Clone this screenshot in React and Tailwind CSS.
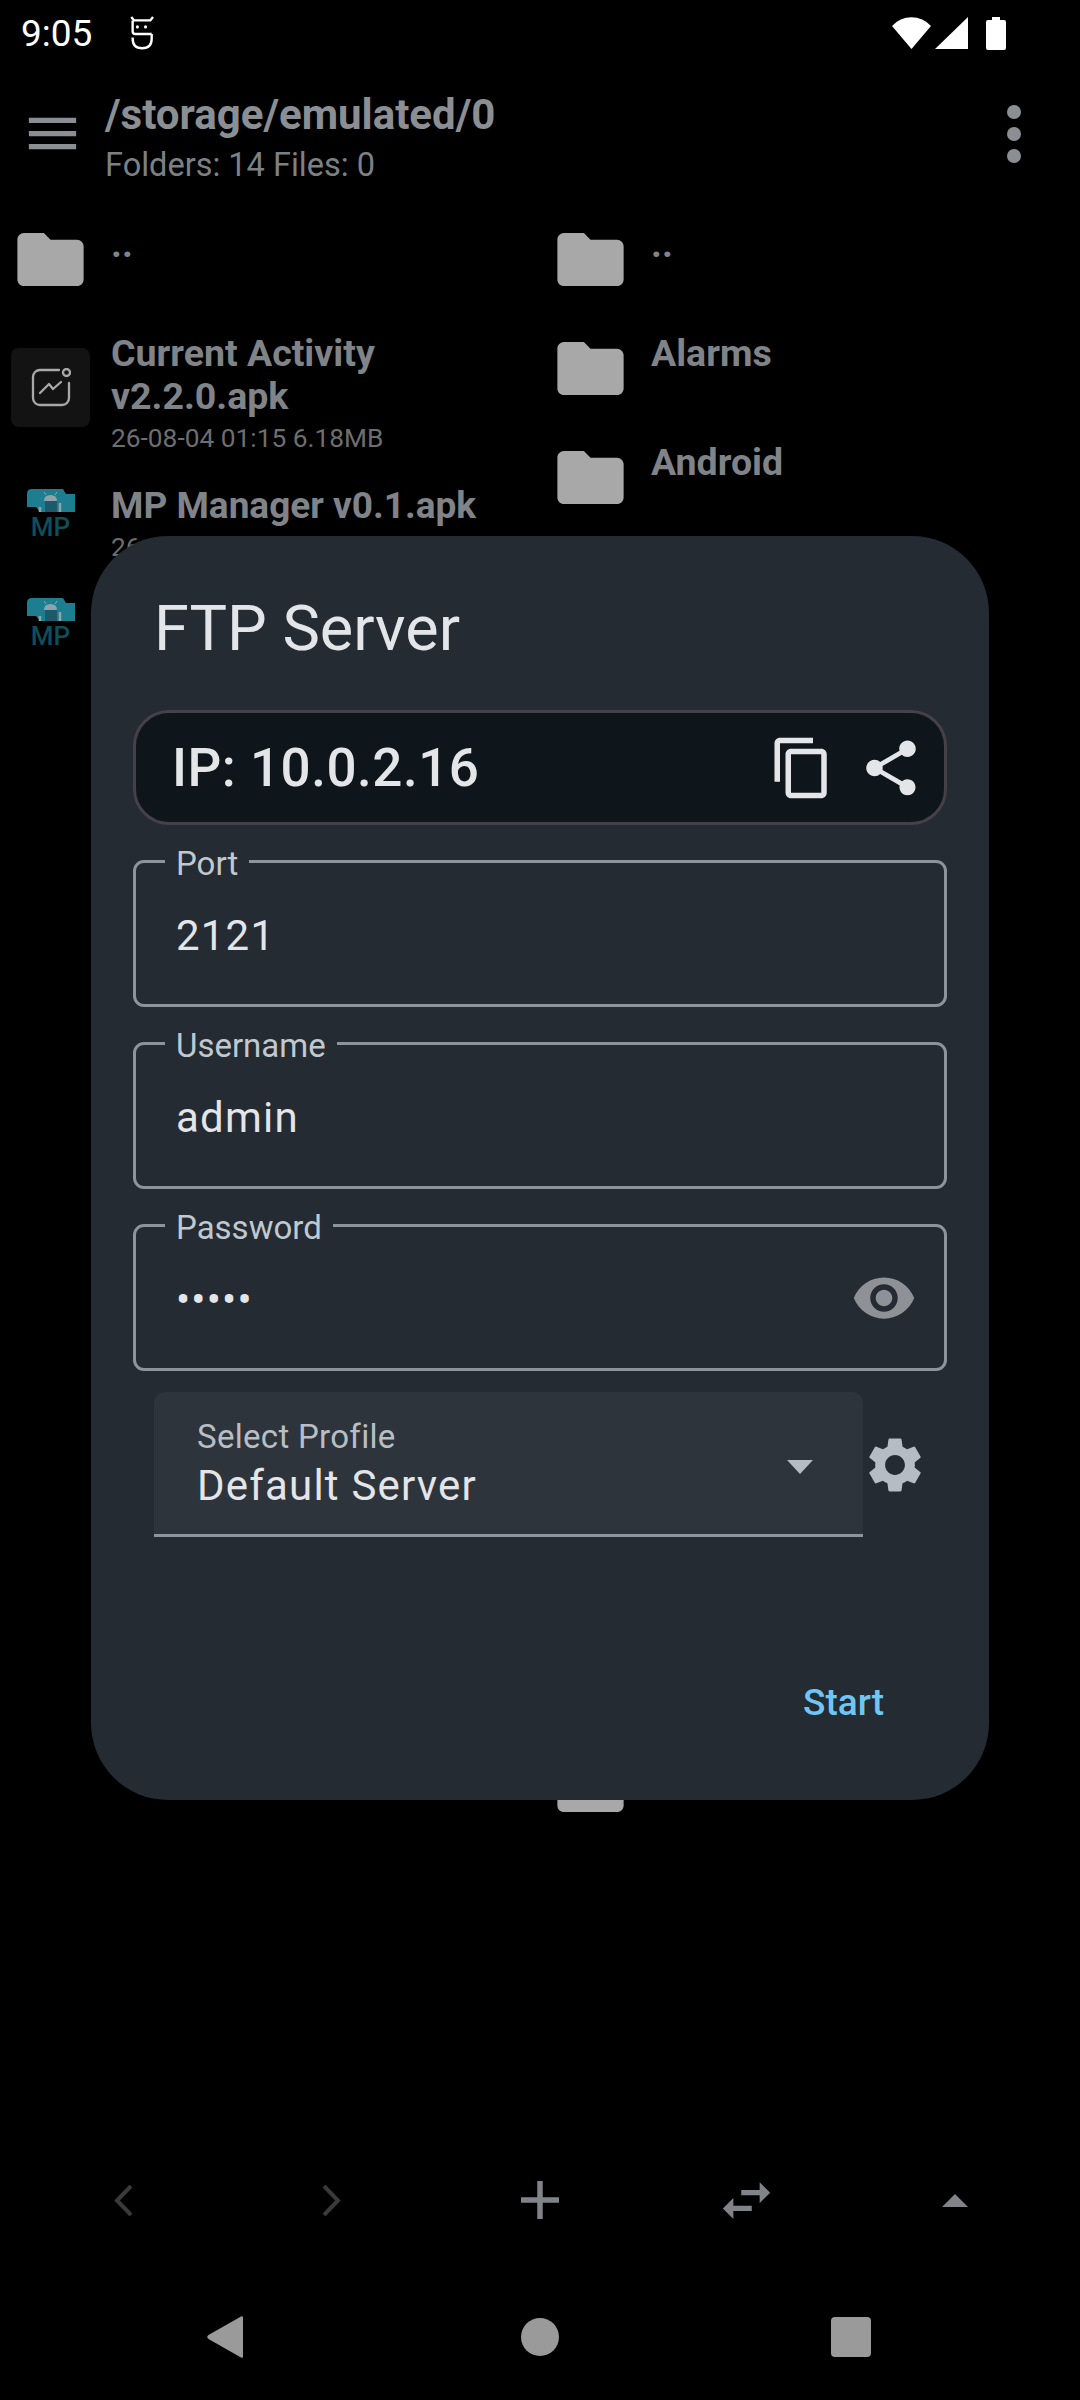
import React from 'react';

const M = {
  menu: 'M3 18h18v-2H3v2zm0-5h18v-2H3v2zm0-7v2h18V6H3z',
  copy: 'M16 1H4c-1.1 0-2 .9-2 2v14h2V3h12V1zm3 4H8c-1.1 0-2 .9-2 2v14c0 1.1.9 2 2 2h11c1.1 0 2-.9 2-2V7c0-1.1-.9-2-2-2zm0 16H8V7h11v14z',
  share: 'M18 16.08c-.76 0-1.44.3-1.96.77L8.91 12.7c.05-.23.09-.46.09-.7s-.04-.47-.09-.7l7.05-4.11c.54.5 1.25.81 2.04.81 1.66 0 3-1.34 3-3s-1.34-3-3-3-3 1.34-3 3c0 .24.04.47.09.7L8.04 9.81C7.5 9.31 6.79 9 6 9c-1.66 0-3 1.34-3 3s1.34 3 3 3c.79 0 1.5-.31 2.04-.81l7.12 4.16c-.05.21-.08.43-.08.65 0 1.61 1.31 2.92 2.92 2.92 1.61 0 2.92-1.31 2.92-2.92s-1.31-2.92-2.92-2.92z',
  eye: 'M12 4.5C7 4.5 2.73 7.61 1 12c1.73 4.39 6 7.5 11 7.5s9.27-3.11 11-7.5c-1.73-4.39-6-7.5-11-7.5zM12 17c-2.76 0-5-2.24-5-5s2.24-5 5-5 5 2.24 5 5-2.24 5-5 5zm0-8c-1.66 0-3 1.34-3 3s1.34 3 3 3 3-1.34 3-3-1.34-3-3-3z',
  gear: 'M19.14 12.94c.04-.3.06-.61.06-.94 0-.32-.02-.64-.07-.94l2.03-1.58c.18-.14.23-.41.12-.61l-1.92-3.32c-.12-.22-.37-.29-.59-.22l-2.39.96c-.5-.38-1.03-.7-1.62-.94l-.36-2.54c-.04-.24-.24-.41-.48-.41h-3.84c-.24 0-.43.17-.47.41l-.36 2.54c-.59.24-1.13.57-1.62.94l-2.39-.96c-.22-.08-.47 0-.59.22L2.74 8.87c-.12.21-.08.47.12.61l2.03 1.58c-.05.3-.09.63-.09.94s.02.64.07.94l-2.03 1.58c-.18.14-.23.41-.12.61l1.92 3.32c.12.22.37.29.59.22l2.39-.96c.5.38 1.03.7 1.62.94l.36 2.54c.05.24.24.41.48.41h3.84c.24 0 .44-.17.47-.41l.36-2.54c.59-.24 1.13-.56 1.62-.94l2.39.96c.22.08.47 0 .59-.22l1.92-3.32c.12-.22.07-.47-.12-.61l-2.01-1.58zM12 15.6c-1.98 0-3.6-1.62-3.6-3.6s1.62-3.6 3.6-3.6 3.6 1.62 3.6 3.6-1.62 3.6-3.6 3.6z',
  swap: 'M6.99 11L3 15l3.99 4v-3H14v-2H6.99v-3zM21 9l-3.99-4v3H10v2h7.01v3L21 9z',
  folder: 'M10 4H4c-1.1 0-2 .9-2 2v12c0 1.1.9 2 2 2h16c1.1 0 2-.9 2-2V8c0-1.1-.9-2-2-2h-8l-2-2z',
};

function Icon({ d, className }) {
  return (
    <svg viewBox="0 0 24 24" fill="currentColor" className={className}>
      <path d={d} />
    </svg>
  );
}

function Folder() {
  return (
    <svg viewBox="2 4 20 16" fill="currentColor" className="w-[67px] h-[53px] shrink-0 text-[#a8a8a8]">
      <path d={M.folder} />
    </svg>
  );
}

function MpIcon() {
  return (
    <div className="w-[79px] shrink-0 flex flex-col items-center">
      <svg viewBox="0 0 48 23" className="w-[48px] h-[23px]">
        <path d="M0 5q0-5 5-5h31l3 5h9v18H13l-4-5H0z" fill="#1c7e8e" />
        <path d="M18 12h12v11H18z" fill="#1c5a6a" />
        <path d="M17 12q0-6 6.500-6t6.500 6z" fill="#8fa3ad" />
        <path d="M19 6l-2-3M28 6l2-3" stroke="#8fa3ad" strokeWidth="1" />
        <path d="M33 14v9M13 18v5" stroke="#8fa3ad" strokeWidth="2.500" />
      </svg>
      <span className="text-[26px] leading-[30px] font-medium text-[#0f4e5a]">MP</span>
    </div>
  );
}

function ActivityIcon() {
  return (
    <div className="w-[79px] h-[79px] ml-[11px] shrink-0 rounded-[8px] bg-[#131313] flex items-center justify-center">
      <svg viewBox="0 0 40 40" className="w-[40px] h-[40px]" fill="none" stroke="#a8a8a8" strokeWidth="2.300" strokeLinecap="round" strokeLinejoin="round">
        <path d="M28 2H9a7 7 0 0 0-7 7v21a7 7 0 0 0 7 7h22a7 7 0 0 0 7-7V15" />
        <circle cx="35.500" cy="4.500" r="3.500" />
        <path d="M9 25l9-9 4 5 8-7" />
      </svg>
    </div>
  );
}

const folders = ['..', 'Alarms', 'Android', 'Audiobooks', 'DCIM', 'Documents', 'Download', 'Movies', 'Music', 'Notifications', 'Pictures', 'Podcasts', 'Recordings', 'Ringtones', 'Screenshots'];

function FolderRow({ name }) {
  return (
    <div className="h-[109px] flex items-center pl-[17px]">
      <Folder />
      <span className="self-start ml-[27px] pt-[18px] text-[37.500px] leading-[43px] font-bold text-[#808488]">{name}</span>
    </div>
  );
}

function Outlined({ label, children }) {
  return (
    <div className="relative h-[147px] rounded-[11px] border-[3px] border-[#8e949b] flex items-center justify-between pl-[40px] pr-[27px]">
      <span className="absolute -top-[19px] left-[29px] px-[11px] bg-[#242b32] text-[33px] leading-[39px] text-[#c0c8d0]">{label}</span>
      {children}
    </div>
  );
}

export default function App() {
  return (
    <div className="relative w-[1080px] h-[2400px] bg-black overflow-hidden font-['Roboto',sans-serif]">
      {/* Status bar */}
      <div className="h-[66px] flex items-center pl-[21px] pr-[74px] text-white">
        <span className="text-[37px] leading-none">9:05</span>
        <svg viewBox="60 25 70 100" className="ml-[38px] w-[25px] h-[34px]" fill="none" stroke="#fff" strokeWidth="7">
          <path d="M62 28l8 10h48l8-10" />
          <path d="M66 38v32q0 8 8 8h48" />
          <path d="M122 78v14q0 28-28 28t-28-28v-4" />
          <circle cx="80" cy="57" r="4.500" fill="#fff" stroke="none" />
          <circle cx="104" cy="57" r="4.500" fill="#fff" stroke="none" />
        </svg>
        <div className="ml-auto flex items-center">
          <svg viewBox="0 0 39 32" className="w-[39px] h-[32px]" fill="#fff"><path d="M19.500 32L0 9A26 26 0 0 1 39 9z" /></svg>
          <svg viewBox="0 0 33 32" className="ml-[4px] w-[33px] h-[32px]" fill="#fff"><path d="M33 0v32H0z" /></svg>
          <svg viewBox="0 0 20 33" className="ml-[18px] w-[20px] h-[33px]" fill="#fff"><path d="M6 0h8v3h4q2 0 2 2v26q0 2-2 2H2q-2 0-2-2V5q0-2 2-2h4z" /></svg>
        </div>
      </div>

      {/* Toolbar */}
      <div className="h-[139px] flex pl-[21px] pr-[59px] text-[#8b8f94]">
        <Icon d={M.menu} className="w-[63px] h-[63px] mt-[36px]" />
        <div className="ml-[21px] pt-[24px]">
          <div className="text-[42px] leading-[50px] font-bold">/storage/emulated/0</div>
          <div className="mt-[5px] text-[32.500px] leading-[40px] text-[#7d8084]">Folders: 14 Files: 0</div>
        </div>
        <svg viewBox="0 0 14 58" fill="currentColor" className="ml-auto w-[14px] h-[58px] mt-[39px]">
          <circle cx="7" cy="7" r="7" /><circle cx="7" cy="29" r="7" /><circle cx="7" cy="51" r="7" />
        </svg>
      </div>

      {/* Two file panes behind the dialog */}
      <div className="grid grid-cols-2">
        <div>
          <FolderRow name=".." />
          <div className="h-[147px] flex items-center">
            <ActivityIcon />
            <div className="self-start ml-[21px] pt-[18px] w-[360px]">
              <div className="text-[37.500px] leading-[43px] font-bold text-[#808488]">Current Activity v2.2.0.apk</div>
              <div className="mt-[1px] text-[26.300px] leading-[38px] text-[#6e6e6e]">26-08-04 01:15 6.18MB</div>
            </div>
          </div>
          <div className="h-[109px] flex items-center pl-[11px]">
            <MpIcon />
            <div className="self-start ml-[21px] pt-[23px]">
              <div className="text-[37px] leading-[43px] font-bold text-[#808488]">MP Manager v0.1.apk</div>
              <div className="mt-[1px] text-[26.300px] leading-[38px] text-[#6e6e6e]">26-08-04 01:15 2.40MB</div>
            </div>
          </div>
          <div className="h-[109px] flex items-center pl-[11px]">
            <MpIcon />
          </div>
        </div>
        <div>
          {folders.map((name, i) => <FolderRow key={i} name={name} />)}
        </div>
      </div>

      {/* FTP dialog */}
      <div className="absolute left-[91px] top-[536px] w-[898px] h-[1264px] rounded-[77px] bg-[#242b32] pt-[53px] px-[42px]">
        <h2 className="pl-[21px] text-[63px] leading-[80px] font-normal text-[#e3e5e8]">FTP Server</h2>
        <div className="mt-[41px] h-[115px] rounded-[36px] border-[3px] border-[#45404a] bg-[#0f161b] flex items-center pl-[36px] pr-[20px] text-[#e3e5e8]">
          <span className="pt-[3px] text-[53px] font-medium tracking-[0.5px]">IP: 10.0.2.16</span>
          <Icon d={M.copy} className="ml-auto w-[66px] h-[66px]" />
          <Icon d={M.share} className="ml-[23px] w-[66px] h-[66px]" />
        </div>
        <div className="mt-[35px] flex flex-col gap-[35px]">
          <Outlined label="Port"><span className="pt-[4px] text-[42px] tracking-[1.2px] text-[#e3e5e8]">2121</span></Outlined>
          <Outlined label="Username"><span className="pt-[4px] text-[42px] tracking-[1.2px] text-[#e3e5e8]">admin</span></Outlined>
          <Outlined label="Password">
            <span className="pt-[4px] text-[42px] tracking-[1.2px] text-[#e3e5e8]">•••••</span>
            <Icon d={M.eye} className="w-[66px] h-[66px] text-[#8e9296]" />
          </Outlined>
        </div>
        <div className="mt-[21px] pl-[21px] flex items-center">
          <div className="w-[709px] h-[145px] rounded-t-[11px] bg-[#2e343c] border-b-[3px] border-[#8e949b] flex items-center justify-between pl-[43px] pr-[50px]">
            <div className="mt-[3px]">
              <div className="text-[33px] leading-[40px] tracking-[0.3px] text-[#b9bec4]">Select Profile</div>
              <div className="mt-[3px] text-[42px] leading-[52px] tracking-[1.2px] text-[#e3e5e8]">Default Server</div>
            </div>
            <svg viewBox="0 0 26 14" className="mt-[8px] w-[26px] h-[14px]" fill="#b5bcc4"><path d="M0 0h26L13 14z" /></svg>
          </div>
          <Icon d={M.gear} className="ml-[-1px] w-[66px] h-[66px] text-[#b5bcc4]" />
        </div>
        <div className="mt-[143px] pr-[63px] text-right text-[37px] leading-[46px] font-medium text-[#6fc6f5]">Start</div>
      </div>

      {/* Bottom actions */}
      <div className="absolute bottom-[167px] left-0 right-0 grid grid-cols-5 h-[66px] px-[19px] place-items-center">
        <svg viewBox="0 0 19 31" className="w-[19px] h-[31px]" fill="none" stroke="#3a3a3a" strokeWidth="4"><path d="M17 1L3 15.500 17 30" /></svg>
        <svg viewBox="0 0 19 31" className="w-[19px] h-[31px]" fill="none" stroke="#3a3a3a" strokeWidth="4"><path d="M2 1l14 14.500L2 30" /></svg>
        <svg viewBox="0 0 38 38" className="w-[38px] h-[38px]" fill="#808488"><path d="M16.250 0h5.500v16.250H38v5.500H21.750V38h-5.500V21.750H0v-5.500h16.250z" /></svg>
        <Icon d={M.swap} className="ml-[-3px] w-[63px] h-[63px] text-[#808488]" />
        <svg viewBox="0 0 26 13" className="ml-[-3px] w-[26px] h-[13px]" fill="#808488"><path d="M13 0l13 13H0z" /></svg>
      </div>

      {/* Android nav bar */}
      <div className="absolute bottom-[42px] left-0 right-0 flex items-center h-[42px] pl-[207px] text-[#9a9a9a]">
        <svg viewBox="0 0 36 42" className="w-[36px] h-[42px]" fill="currentColor"><path d="M34 .5q2-1 2 1v39q0 2-2 1L1.500 23q-2.500-2 0-4z" /></svg>
        <div className="ml-[278px] w-[38px] h-[38px] rounded-full bg-[#9a9a9a]" />
        <div className="ml-[272px] w-[40px] h-[40px] rounded-[4px] bg-[#9a9a9a]" />
      </div>
    </div>
  );
}
